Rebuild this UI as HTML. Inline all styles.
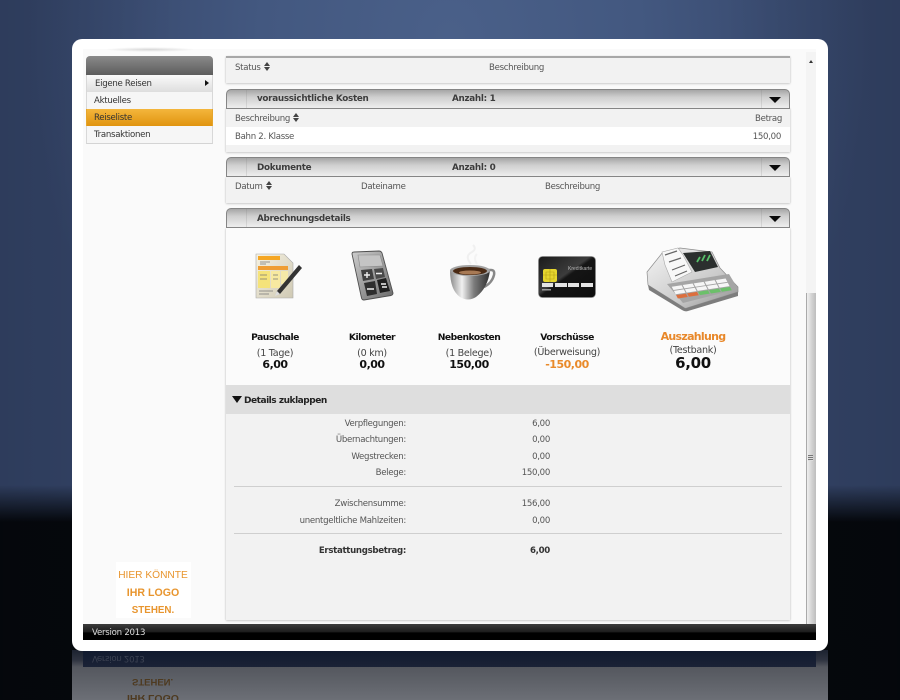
<!DOCTYPE html>
<html lang="de"><head><meta charset="utf-8"><title>Reiseliste</title>
<style>
html,body{margin:0;padding:0;width:900px;height:700px;overflow:hidden;background:#05080d}
*{box-sizing:border-box}
body{position:relative;font-family:"DejaVu Sans","Liberation Sans",sans-serif;font-size:8.6px;letter-spacing:-.3px;color:#555}
.a{position:absolute;white-space:nowrap}
.bg{position:absolute;left:0;top:0;width:900px;height:700px;background:
 linear-gradient(180deg,rgba(5,8,13,0) 0,rgba(5,8,13,0) 485px,rgba(5,8,13,1) 522px),
 radial-gradient(ellipse 420px 520px at 450px 40px,#4a6089 0,#435880 45%,#334366 100%)}
.bg2{position:absolute;left:0;top:0;width:900px;height:700px;background:linear-gradient(90deg,rgba(0,0,0,.1),rgba(0,0,0,0) 20%,rgba(0,0,0,0) 80%,rgba(0,0,0,.1))}
.refl{position:absolute;left:72px;top:650px;width:756px;height:50px;background:linear-gradient(180deg,#1c2230 0,#2e3340 20%,#54575e 34%,#6c6f76 100%)}
.refl2{position:absolute;left:83px;top:651px;width:733px;height:16px;background:linear-gradient(180deg,#111a2e,#1a2236)}
.card{position:absolute;left:72px;top:39px;width:756px;height:612px;background:#fff;border-radius:10px}
.inner{position:absolute;left:83px;top:49px;width:733px;height:575px;background:#fafafa}
.panel{position:absolute;left:226px;width:564px;background:#f2f2f2;box-shadow:0 1px 2px rgba(0,0,0,.18),-1px 0 1px rgba(0,0,0,.05),1px 0 1px rgba(0,0,0,.05)}
.hd{position:absolute;left:226px;width:564px;height:20px;border:1px solid #858585;border-radius:5px 5px 0 0;background:linear-gradient(180deg,#a6a6a6 0,#cfcfcf 40%,#eeeeee 100%)}
.hd i{position:absolute;top:0;height:18px;width:1px;background:rgba(120,120,120,.18)}
.hd i.l{left:19px}.hd i.r{right:26px}
.hd b{position:absolute;right:8px;top:7px;width:0;height:0;border-left:6px solid transparent;border-right:6px solid transparent;border-top:6px solid #0a0a0a}
.ht{font-weight:bold;color:#3c3c3c;font-size:8.8px}
.sort{display:inline-block;width:7px;height:9px;vertical-align:-1px;margin-left:3px;position:relative}
.sort:before{content:"";position:absolute;left:0;top:0;border-left:3.5px solid transparent;border-right:3.5px solid transparent;border-bottom:4px solid #444}
.sort:after{content:"";position:absolute;left:0;bottom:0;border-left:3.5px solid transparent;border-right:3.5px solid transparent;border-top:4px solid #444}
.m{position:absolute;left:86px;width:127px;height:17px;line-height:19px;padding-left:7px;color:#333;font-size:8.6px;border-left:1px solid #d8d8d8;border-right:1px solid #d8d8d8}
.c{text-align:center;transform:translateX(-50%)}
.t{font-weight:bold;color:#111;font-size:9.2px;letter-spacing:-.5px}
.s{color:#444;font-size:9.6px;letter-spacing:-.3px}
.v{font-weight:bold;color:#111;font-size:11px;letter-spacing:-.5px}
.r{text-align:right;transform:translateX(-100%);color:#555}
.hr{position:absolute;left:234px;width:548px;height:1px;background:#cfcfcf}
.o{color:#e58a1f;letter-spacing:0}
</style></head><body>
<div class="bg"></div><div class="bg2"></div>
<div class="refl"></div><div class="refl2"></div>
<div class="a" style="left:92px;top:653px;color:#3c4252;font-size:8.6px;transform:scaleY(-1)">Version 2013</div>
<div class="a" style="left:132px;top:676px;font:bold 9.5px 'Liberation Sans',sans-serif;letter-spacing:0;color:#4e3a20;transform:scaleY(-1)">STEHEN.</div>
<div class="a" style="left:127px;top:692px;font:bold 10.5px 'Liberation Sans',sans-serif;letter-spacing:0;color:#4e3a20;transform:scaleY(-1)">IHR LOGO</div>

<div class="card"></div>
<div class="inner"></div>
<div class="a" style="left:105px;top:47px;width:90px;height:5px;background:radial-gradient(ellipse at center,rgba(0,0,0,.14),rgba(0,0,0,0) 70%)"></div>

<!-- sidebar -->
<div class="a" style="left:86px;top:56px;width:127px;height:19px;border-radius:4px 4px 0 0;background:linear-gradient(180deg,#8a8a8a,#5d5d5d)"></div>
<div class="m" style="top:75px;height:18px;line-height:19px;padding-left:8px;background:linear-gradient(180deg,#fafafa,#dcdcdc)">Eigene Reisen</div>
<div class="a" style="left:205px;top:80px;border-top:3.5px solid transparent;border-bottom:3.5px solid transparent;border-left:4px solid #111"></div>
<div class="m" style="top:92px;background:#f6f6f6">Aktuelles</div>
<div class="m" style="top:109px;background:linear-gradient(180deg,#f4b63c,#e0940f);border-color:#e5a52c">Reiseliste</div>
<div class="m" style="top:126px;height:18px;background:#f6f6f6;border-bottom:1px solid #d4d4d4">Transaktionen</div>

<!-- logo -->
<div class="a" style="left:116px;top:562px;width:75px;height:56px;background:#fff"></div>
<div class="a c o" style="left:153px;top:570px;font:10.2px 'Liberation Sans',sans-serif;color:#e8952e">HIER KÖNNTE</div>
<div class="a c o" style="left:153px;top:587px;font:bold 10.6px 'Liberation Sans',sans-serif;color:#e8952e">IHR LOGO</div>
<div class="a c o" style="left:153px;top:605px;font:bold 9.8px 'Liberation Sans',sans-serif;color:#e8952e">STEHEN.</div>

<!-- status panel -->
<div class="panel" style="top:56px;height:27px;border-top:2px solid #a8a8a8"></div>
<div class="a" style="left:235px;top:62px">Status<span class="sort"></span></div>
<div class="a" style="left:489px;top:63px">Beschreibung</div>

<!-- Kosten -->
<div class="panel" style="top:108px;height:44px"></div>
<div class="hd" style="top:89px"><i class="l"></i><i class="r"></i><b></b></div>
<div class="a ht" style="left:257px;top:94px">voraussichtliche Kosten</div>
<div class="a ht" style="left:452px;top:94px">Anzahl: 1</div>
<div class="a" style="left:235px;top:113px">Beschreibung<span class="sort"></span></div>
<div class="a r" style="left:782px;top:114px">Betrag</div>
<div class="a" style="left:226px;top:127px;width:564px;height:18px;background:#fff"></div>
<div class="a" style="left:235px;top:132px">Bahn 2. Klasse</div>
<div class="a r" style="left:781px;top:132px">150,00</div>

<!-- Dokumente -->
<div class="panel" style="top:177px;height:26px"></div>
<div class="hd" style="top:157px"><i class="l"></i><i class="r"></i><b></b></div>
<div class="a ht" style="left:257px;top:163px">Dokumente</div>
<div class="a ht" style="left:452px;top:163px">Anzahl: 0</div>
<div class="a" style="left:235px;top:181px">Datum<span class="sort"></span></div>
<div class="a" style="left:361px;top:182px">Dateiname</div>
<div class="a" style="left:545px;top:182px">Beschreibung</div>

<!-- Abrechnung -->
<div class="panel" style="top:228px;height:392px"></div>
<div class="a" style="left:226px;top:228px;width:564px;height:157px;background:#fbfbfb"></div>
<div class="hd" style="top:208px"><i class="l"></i><i class="r"></i><b></b></div>
<div class="a ht" style="left:257px;top:214px">Abrechnungsdetails</div>

<!-- Pauschale icon -->
<svg class="a" style="left:250px;top:250px" width="56" height="54" viewBox="0 0 56 54">
<defs><linearGradient id="pg" x1="0" y1="0" x2="1" y2="1"><stop offset="0" stop-color="#f6f2e2"/><stop offset="1" stop-color="#cfc9b4"/></linearGradient></defs>
<path d="M6 4H34L43 13V48H6Z" fill="url(#pg)" stroke="#aaa" stroke-width=".6"/>
<path d="M8 6H30V10H8Z" fill="#f5a623"/><path d="M8 16H38V20H8Z" fill="#ef9d33"/>
<path d="M8 21H20V38H8Z" fill="#f5e37a"/><path d="M21 21H30V38H21Z" fill="#f7e9a0"/><path d="M31 21H38V34H31Z" fill="#f5e9a8"/>
<path d="M10 12h10M10 14h6M10 25h7M10 29h7M23 25h5M23 29h5M9 41h14M9 44h10" stroke="#777" stroke-width=".8"/>
<path d="M27 41L49 15l3 3L30 44l-4 1Z" fill="#333"/><path d="M27 41l3 3-5 2Z" fill="#ddd"/>
</svg>
<!-- Calculator icon -->
<svg class="a" style="left:346px;top:248px" width="52" height="54" viewBox="0 0 52 54">
<defs><linearGradient id="cg" x1="0" y1="0" x2="1" y2="1"><stop offset="0" stop-color="#cdcdcd"/><stop offset="1" stop-color="#6a6a6a"/></linearGradient></defs>
<path d="M8 4L33 3Q35 3 36 5L47 45Q47 47 45 47.500L18 52Q16 52 15.500 50L6 6Q6 4 8 4Z" fill="url(#cg)" stroke="#4f4f4f" stroke-width=".9"/>
<path d="M12 7L34 7L37 18L14 19Z" fill="#c4c4c4" stroke="#8a8a8a" stroke-width=".6"/>
<path d="M15 22L26 21L28 31L17 33Z" fill="#404040"/><path d="M28 21L37 20L39 29L30 31Z" fill="#4a4a4a"/>
<path d="M18 35L29 33L31 46L21 48Z" fill="#2e2e2e"/><path d="M31 32L40 30L44 43L34 45Z" fill="#1f1f1f"/>
<path d="M18 27h6M21 24v6M30 25.500h6M21 41h7M35 36h5M36 39h5" stroke="#f0f0f0" stroke-width="1.400"/>
</svg>
<!-- Cup icon -->
<svg class="a" style="left:444px;top:240px" width="54" height="64" viewBox="0 0 54 64">
<defs><linearGradient id="cu" x1="0" y1="0" x2="1" y2="0"><stop offset="0" stop-color="#8a8a8a"/><stop offset=".3" stop-color="#f1f1f1"/><stop offset=".6" stop-color="#7c7c7c"/><stop offset="1" stop-color="#2e2e2e"/></linearGradient></defs>
<path d="M27 24Q20 16 28 12Q33 9 29 5" fill="none" stroke="#f0f0f0" stroke-width="2"/><path d="M33 24Q29 18 33 14" fill="none" stroke="#f3f3f3" stroke-width="2"/>
<path d="M44 30h3q4 0 3 5q-2 8-10 12" fill="none" stroke="#888" stroke-width="2.500"/>
<path d="M6 30Q6 50 16 57Q24 62 32 57Q44 48 46 30Z" fill="url(#cu)"/>
<ellipse cx="26" cy="30.500" rx="20" ry="5.500" fill="#a3a3a3"/><ellipse cx="26" cy="31" rx="17" ry="4" fill="#4a2a14"/><ellipse cx="26" cy="32.500" rx="11" ry="2" fill="#a87a55"/>
</svg>
<!-- Card icon -->
<svg class="a" style="left:538px;top:256px" width="59" height="43" viewBox="0 0 59 43">
<defs><linearGradient id="kg" x1="0" y1="0" x2="1" y2="1"><stop offset="0" stop-color="#1a1a1a"/><stop offset=".45" stop-color="#3c3c3c"/><stop offset=".5" stop-color="#151515"/><stop offset="1" stop-color="#0d0d0d"/></linearGradient></defs>
<rect x=".500" y=".500" width="57" height="41" rx="4" fill="url(#kg)" stroke="#888" stroke-width=".7"/>
<rect x="5" y="13" width="14" height="13" rx="2" fill="#e6d62e"/><path d="M5 19h14M12 13v13M8 16h8v7H8Z" fill="none" stroke="#b49e16" stroke-width=".6"/>
<path d="M4 27h11v4H4ZM17 27h12v4H17ZM30 27h11v4H30ZM43 27h12v4H43Z" fill="#e4e4e4"/>
<path d="M4 33h9v1.500H4Z" fill="#999"/>
<text x="30" y="14" font-family="Liberation Sans,sans-serif" font-size="5" letter-spacing="0" fill="#bbb">Kreditkarte</text>
</svg>
<!-- Register icon -->
<svg class="a" style="left:645px;top:243px" width="96" height="70" viewBox="0 0 96 70">
<defs><linearGradient id="rg" x1="0" y1="0" x2="1" y2="1"><stop offset="0" stop-color="#f5f5f5"/><stop offset=".6" stop-color="#cbcbcb"/><stop offset="1" stop-color="#8a8a8a"/></linearGradient></defs>
<path d="M2 29L18 9L35 5L67 9L75 25L93 44V49L42 65Q40 66 38 64L3 42Z" fill="url(#rg)" stroke="#8c8c8c" stroke-width=".7" stroke-linejoin="round"/>
<path d="M3 42L38 64Q40 66 42 65L93 49V53L43 68Q40 69 37 67L4 47Z" fill="#7d7d7d"/>
<path d="M38 10L65 8L73 24L50 29Z" fill="#2b2f2e"/><path d="M52 19l3-5M57 18l3-6M62 18l3-6" stroke="#57c06a" stroke-width="1.800"/>
<path d="M17 9L33 5L38 12L47 29L27 39L20 22Z" fill="#f8f8f8" stroke="#aaa" stroke-width=".6"/>
<path d="M20 12l12-4M24 19l12-4M27 27l13-5M30 33l12-5" stroke="#666" stroke-width="1.200"/>
<path d="M22 41L84 31L93 46L38 60Z" fill="#a5a5a5"/>
<g transform="matrix(11,-1.670,2.200,4.200,26.700,43.700)">
<g fill="#f6f6f6"><rect x="0" y="0" width=".9" height=".8"/><rect x="1" y="0" width=".9" height=".8"/><rect x="2" y="0" width=".9" height=".8"/><rect x="3" y="0" width=".9" height=".8"/><rect x="4" y="0" width=".9" height=".8"/><rect x="0" y="1" width=".9" height=".8"/><rect x="1" y="1" width=".9" height=".8"/><rect x="2" y="1" width=".9" height=".8"/><rect x="3" y="1" width=".9" height=".8"/><rect x="4" y="1" width=".9" height=".8"/></g>
<g fill="#dc6f3e"><rect x="0" y="2" width=".9" height=".8"/><rect x="1" y="2" width=".9" height=".8"/></g>
<g fill="#6cc06a"><rect x="2" y="2" width=".9" height=".8"/><rect x="3" y="2" width=".9" height=".8"/><rect x="4" y="2" width=".9" height=".8"/></g>
</g>
</svg>

<div class="a c t" style="left:275px;top:332px">Pauschale</div>
<div class="a c s" style="left:275px;top:348px">(1 Tage)</div>
<div class="a c v" style="left:275px;top:358px">6,00</div>
<div class="a c t" style="left:372px;top:332px">Kilometer</div>
<div class="a c s" style="left:372px;top:348px">(0 km)</div>
<div class="a c v" style="left:372px;top:358px">0,00</div>
<div class="a c t" style="left:469px;top:332px">Nebenkosten</div>
<div class="a c s" style="left:469px;top:348px">(1 Belege)</div>
<div class="a c v" style="left:469px;top:358px">150,00</div>
<div class="a c t" style="left:567px;top:332px">Vorschüsse</div>
<div class="a c s" style="left:567px;top:347px">(Überweisung)</div>
<div class="a c v" style="left:567px;top:358px;color:#e98a2a">-150,00</div>
<div class="a c" style="left:693px;top:330px;font-weight:bold;font-size:11px;letter-spacing:-.7px;color:#e8882a">Auszahlung</div>
<div class="a c s" style="left:693px;top:345px">(Testbank)</div>
<div class="a c" style="left:693px;top:354px;font-weight:bold;font-size:15px;letter-spacing:-.3px;color:#111">6,00</div>

<div class="a" style="left:226px;top:385px;width:564px;height:29px;background:#dedede"></div>
<div class="a" style="left:232px;top:396px;border-left:5.500px solid transparent;border-right:5.500px solid transparent;border-top:7px solid #111"></div>
<div class="a" style="left:244px;top:396px;font-weight:bold;font-size:9px;letter-spacing:-.47px;color:#222">Details zuklappen</div>

<div class="a r" style="left:406px;top:419px">Verpflegungen:</div><div class="a r" style="left:550px;top:419px">6,00</div>
<div class="a r" style="left:406px;top:435px">Übernachtungen:</div><div class="a r" style="left:550px;top:435px">0,00</div>
<div class="a r" style="left:406px;top:452px">Wegstrecken:</div><div class="a r" style="left:550px;top:452px">0,00</div>
<div class="a r" style="left:406px;top:468px">Belege:</div><div class="a r" style="left:550px;top:468px">150,00</div>
<div class="hr" style="top:486px"></div>
<div class="a r" style="left:406px;top:499px">Zwischensumme:</div><div class="a r" style="left:550px;top:499px">156,00</div>
<div class="a r" style="left:406px;top:516px">unentgeltliche Mahlzeiten:</div><div class="a r" style="left:550px;top:516px">0,00</div>
<div class="hr" style="top:533px"></div>
<div class="a r" style="left:406px;top:546px;font-weight:bold;color:#333">Erstattungsbetrag:</div><div class="a r" style="left:550px;top:546px;font-weight:bold;color:#333">6,00</div>

<!-- scrollbar -->
<div class="a" style="left:806px;top:52px;width:10px;height:572px;background:#f4f4f4"></div>
<div class="a" style="left:809px;top:60px;border-left:2.500px solid transparent;border-right:2.500px solid transparent;border-bottom:3px solid #333"></div>
<div class="a" style="left:806px;top:293px;width:10px;height:331px;background:linear-gradient(90deg,#f0f0f0,#cfcfcf 60%,#bdbdbd);border-left:1px solid #aaa"></div>
<div class="a" style="left:808px;top:455px;width:5px;height:6px;background:repeating-linear-gradient(180deg,#777 0,#777 1px,#ddd 1px,#ddd 2px)"></div>

<!-- footer -->
<div class="a" style="left:83px;top:624px;width:733px;height:16px;background:linear-gradient(180deg,#3d3d3d 0,#1c1c1c 50%,#000 55%,#000 100%)"></div>
<div class="a" style="left:92px;top:628px;color:#ddd;font-size:8.6px;letter-spacing:-.25px">Version 2013</div>
</body></html>
